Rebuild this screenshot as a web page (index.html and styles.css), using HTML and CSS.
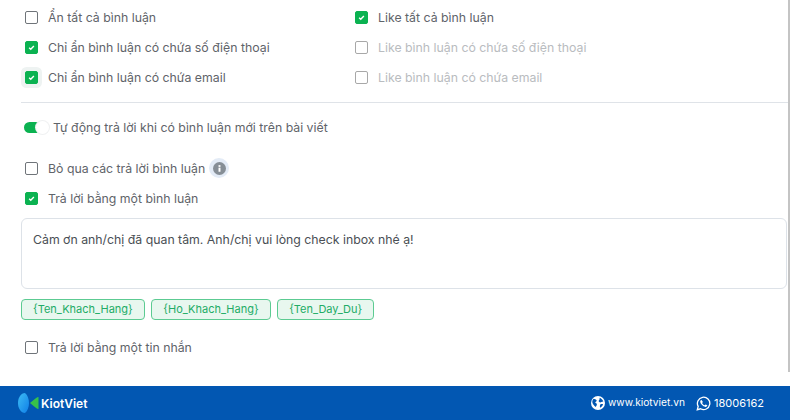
FILE: index.html
```html
<!DOCTYPE html>
<html lang="vi">
<head>
  <meta charset="UTF-8">
  <title>Cài đặt bình luận</title>
  <link rel="stylesheet" href="styles.css">
</head>
<body>
  <div class="page">
    <main class="content">
      <div class="options">
        <div class="col">
          <label class="check"><span class="box"></span>Ẩn tất cả bình luận</label>
          <label class="check"><span class="box on"><svg viewBox="0 0 12 12"><path d="M3.4 6.2l1.8 1.7 3.4-3.5"/></svg></span>Chỉ ẩn bình luận có chứa số điện thoại</label>
          <label class="check"><span class="box on focus"><svg viewBox="0 0 12 12"><path d="M3.4 6.2l1.8 1.7 3.4-3.5"/></svg></span>Chỉ ẩn bình luận có chứa email</label>
        </div>
        <div class="col">
          <label class="check"><span class="box on"><svg viewBox="0 0 12 12"><path d="M3.4 6.2l1.8 1.7 3.4-3.5"/></svg></span>Like tất cả bình luận</label>
          <label class="check disabled"><span class="box"></span>Like bình luận có chứa số điện thoại</label>
          <label class="check disabled"><span class="box"></span>Like bình luận có chứa email</label>
        </div>
      </div>

      <div class="auto-reply">
        <span class="switch"><span class="knob"></span></span>
        <span>Tự động trả lời khi có bình luận mới trên bài viết</span>
      </div>

      <label class="check skip"><span class="box"></span>Bỏ qua các trả lời bình luận
        <span class="info"><svg viewBox="0 0 12 12"><circle cx="6" cy="6" r="6"/><rect class="i" x="5.1" y="5.2" width="1.8" height="3.8"/><rect class="i" x="5.1" y="2.9" width="1.8" height="1.6"/></svg></span>
      </label>
      <label class="check"><span class="box on"><svg viewBox="0 0 12 12"><path d="M3.4 6.2l1.8 1.7 3.4-3.5"/></svg></span>Trả lời bằng một bình luận</label>

      <div class="reply-box">Cảm ơn anh/chị đã quan tâm. Anh/chị vui lòng check inbox nhé ạ!</div>

      <div class="tags">
        <span class="tag">{Ten_Khach_Hang}</span>
        <span class="tag">{Ho_Khach_Hang}</span>
        <span class="tag">{Ten_Day_Du}</span>
      </div>

      <label class="check message"><span class="box"></span>Trả lời bằng một tin nhắn</label>
    </main>
    <div class="scrollbar"></div>
  </div>

  <footer class="footer">
    <div class="brand">
      <svg class="logo" width="22" height="20" viewBox="0 0 22 20">
        <defs>
          <linearGradient id="logoBlue" x1="0" y1="0" x2="1" y2="1">
            <stop offset="0" stop-color="#3dbcf4"/>
            <stop offset="1" stop-color="#0f7fe8"/>
          </linearGradient>
        </defs>
        <path fill="url(#logoBlue)" d="M7 0C3 0 0 4.500 0 10s3 10 7 10c2.500-2 4-6 4-10S9.500 2 7 0z"/>
        <path fill="#37c14a" d="M20.500 4v12c-1.700-.3-3-1.300-4.300-2.500L12 10l4.200-3.500c1.300-1.200 2.600-2.200 4.300-2.500z"/>
      </svg>
      <span>KiotViet</span>
    </div>
    <div class="contact">
      <span class="link">
        <svg width="14" height="14" viewBox="0 0 14 14"><circle cx="7" cy="7" r="7" fill="#fff"/><path fill="#0257b2" d="M2.500 2.700c1.300.2 2.600.6 3.100 1.500.4.800-.6 1.300-1.100 1.700-.5.500 0 1.100.6 1.300.8.300.9 1 .7 1.700-.2.800-.7 1.500-1.200 2C2.900 9.600 1.300 7.600 1.300 6c0-1.200.5-2.400 1.200-3.300zM8.500 1.800c1.700.5 3.200 2 3.800 3.700-.7.400-1.400.2-2 .6-.8.500-1.600.3-2.300-.3-.6-.5-.3-1.200.2-1.700.5-.6.600-1.500.3-2.300zM9.500 8.300c.7-.3 1.700-.3 2.600 0-.4 1.500-1.500 2.800-2.900 3.500-.4-.9-.5-2.800.3-3.500z"/></svg>
        <span class="site">www.kiotviet.vn</span>
      </span>
      <span class="link">
        <svg width="15" height="15" viewBox="0 0 15 15"><path fill="none" stroke="#fff" stroke-width="1.300" d="M1.300 13.700l.9-3.300A6.200 6.200 0 1 1 4.600 12.800z"/><path fill="#fff" d="M5.300 3.900c-.5.100-1.100.8-1.100 1.700 0 2 2.600 5 5.300 5.300.9.100 1.800-.7 1.800-1.300 0-.4-1.500-1.200-1.800-1.100-.3.100-.5.700-.8.700-.9 0-2.400-1.500-2.500-2.300 0-.3.600-.6.600-.9 0-.4-.9-2.100-1.500-2.100z"/></svg>
        18006162
      </span>
    </div>
  </footer>
</body>
</html>
```
FILE: styles.css
```css
* {
  box-sizing: border-box;
}
html, body {
  margin: 0;
  height: 100%;
  overflow: hidden;
}
body {
  font-family: Inter, "Liberation Sans", sans-serif;
  font-size: 12.3px;
  color: #5f646a;
  background-color: #fff;
  display: flex;
  flex-direction: column;
}
.page {
  height: 386px;
  display: flex;
}
.content {
  flex: 1;
  padding: 7px 0 0 21px;
}
.scrollbar {
  width: 2px;
  height: 372px;
  background-color: #c4c4c4;
}
.options {
  display: flex;
  padding-bottom: 5px;
  border-bottom: 1px solid #dfe3e8;
}
.col {
  width: 330px;
}
.check {
  display: flex;
  align-items: center;
  height: 20px;
  margin-bottom: 10px;
  padding-left: 4px;
}
.box {
  flex: none;
  width: 13px;
  height: 13px;
  margin-right: 10px;
  border: 1px solid #6f7479;
  border-radius: 2px;
  background-color: #fff;
}
.box svg {
  display: block;
  width: 11px;
  height: 11px;
  fill: none;
  stroke: #fff;
  stroke-width: 1.5;
}
.box.on {
  border-color: #0bb251;
  background-color: #0bb251;
}
.box.focus {
  box-shadow: 0 0 0 4px #eef3f2;
}
.disabled {
  color: #b9bcc0;
}
.disabled .box {
  border-color: #a8a8a8;
}
.auto-reply {
  display: flex;
  align-items: center;
  height: 20px;
  margin: 14px 0 21px;
  padding-left: 3px;
}
.switch {
  position: relative;
  width: 22px;
  height: 11px;
  margin-right: 7px;
  border-radius: 6px;
  background-color: #0bb251;
}
.knob {
  position: absolute;
  top: -1px;
  right: -3px;
  width: 13px;
  height: 13px;
  border-radius: 50%;
  background-color: #fff;
  box-shadow: 0 0 0 1px #f0f1f2;
}
.info {
  width: 20px;
  height: 20px;
  margin-left: 4px;
  padding: 3.5px;
  border-radius: 50%;
  background-color: #e3ebf6;
}
.info svg {
  display: block;
  width: 13px;
  height: 13px;
  fill: #868e96;
}
.info .i {
  fill: #fff;
}
.reply-box {
  width: 766px;
  height: 71px;
  padding: 13px 11px;
  border: 1px solid #dde2e8;
  border-radius: 6px;
  color: #4a4f55;
}
.tags {
  display: flex;
  gap: 6.5px;
  margin-top: 10px;
}
.tag {
  height: 21px;
  padding: 0 11px;
  line-height: 19px;
  border: 1px solid #5ccb92;
  border-radius: 4px;
  background-color: #e8f7ef;
  color: #22ac66;
  font-size: 11px;
}
.message {
  margin: 17px 0 0;
}
.footer {
  flex: 1;
  display: flex;
  align-items: center;
  justify-content: space-between;
  padding: 0 26px 0 18px;
  background-color: #0257b2;
  color: #fff;
}
.brand {
  display: flex;
  align-items: center;
  gap: 1px;
  font-size: 12px;
  font-weight: 600;
}
.contact {
  display: flex;
  align-items: center;
  gap: 11px;
  font-size: 11px;
}
.link {
  display: flex;
  align-items: center;
  gap: 3px;
}
.site {
  margin-bottom: 2px;
  font-size: 10.2px;
}
```
